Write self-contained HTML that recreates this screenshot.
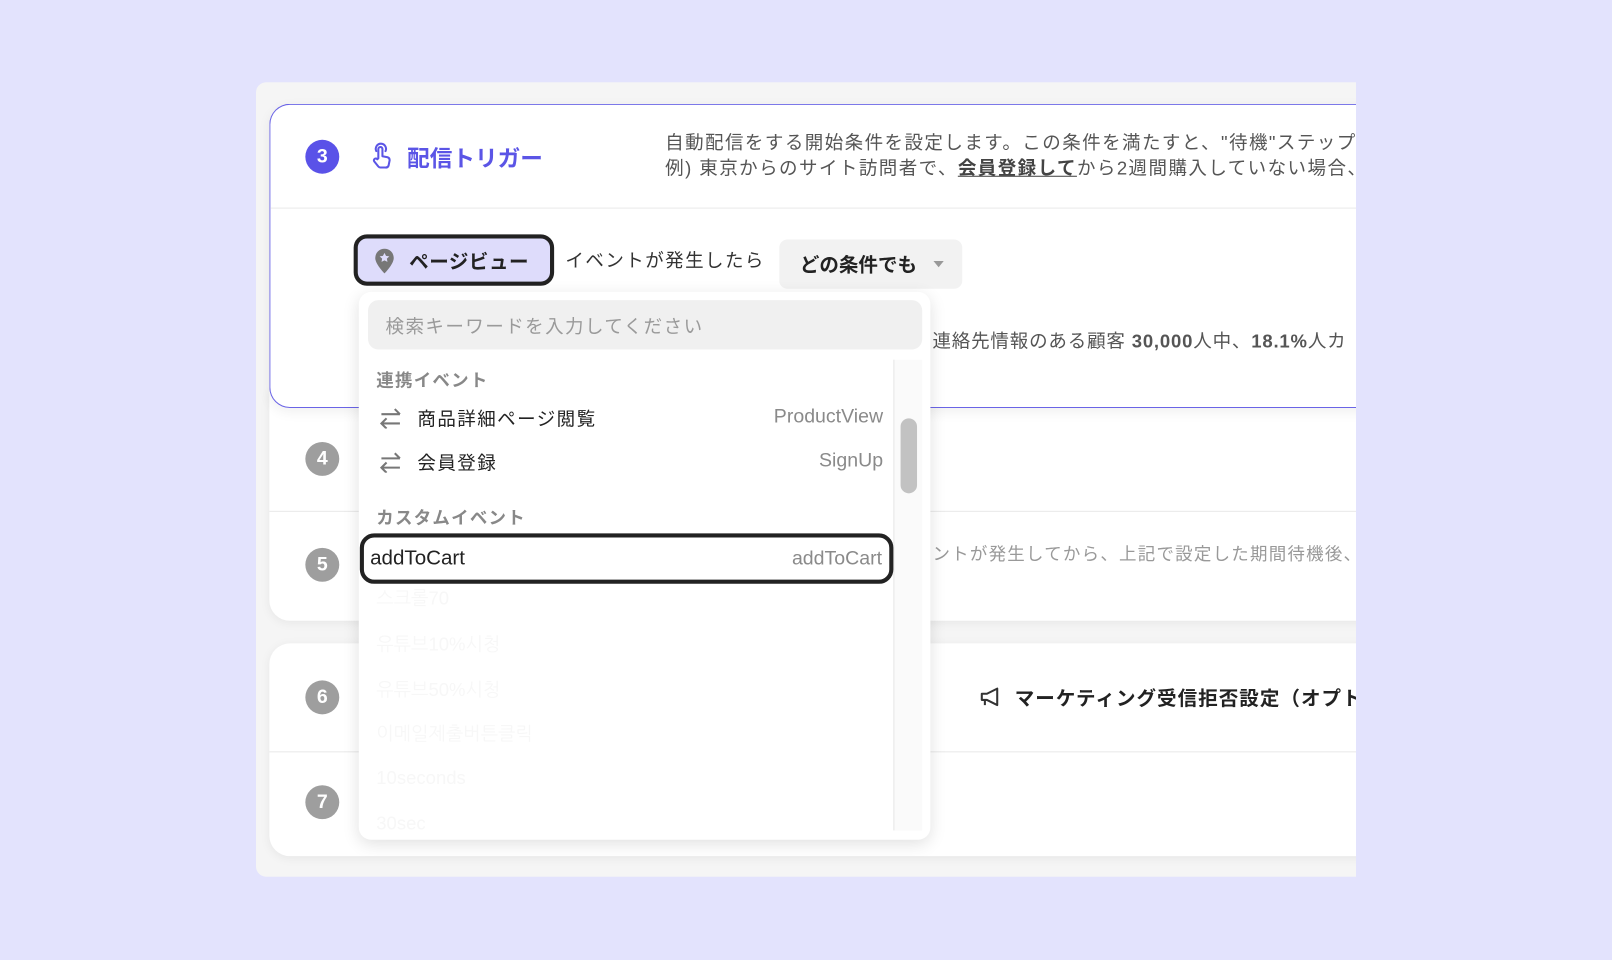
<!DOCTYPE html>
<html><head><meta charset="utf-8"><style>
*{margin:0;padding:0;box-sizing:border-box}
html,body{width:1612px;height:960px;overflow:hidden;background:#e3e3fd}
body{font-family:"Liberation Sans","Noto Sans CJK JP",sans-serif;color:#222}
#w{position:absolute;left:0;top:0;width:1568px;height:934px;transform-origin:0 0;transform:scale(1.02806,1.0278)}
#clip{position:absolute;left:0;top:0;width:1319px;height:934px;overflow:hidden}
.a{position:absolute;white-space:nowrap}
.j{letter-spacing:1.4px}
.num{position:absolute;width:33px;height:33px;border-radius:50%;background:#9e9e9e;color:#fff;font-weight:bold;font-size:19px;text-align:center;line-height:33px}
.card{position:absolute;background:#fff;box-shadow:0 2px 10px rgba(0,0,0,.06)}
.row{position:absolute;left:0;width:520px;height:43px;font-size:18px}
.row .l{position:absolute;left:57px;top:10px;letter-spacing:1.4px}
.row .r{position:absolute;right:10px;top:11px;color:#8a8a8a;font-size:19px}
.fade{color:#f7f7f7;font-size:18px}
</style></head><body><div id="w"><div id="clip">
<div class="a" style="left:249px;top:80px;width:1100px;height:773px;background:#f5f5f5;border-radius:10px 0 0 10px"></div>

<div class="card" style="left:262px;top:380px;width:1100px;height:224px;border-radius:0 0 20px 20px"></div>
<div class="a" style="left:262px;top:497px;width:1100px;height:1px;background:#e8e8e8"></div>
<div class="num" style="left:297px;top:430px">4</div>
<div class="num" style="left:297px;top:533px">5</div>
<div class="a j" style="left:907px;top:525px;font-size:17px;color:#999;letter-spacing:1.2px">ントが発生してから、上記で設定した期間待機後、行</div>

<div class="card" style="left:262px;top:626px;width:1100px;height:207px;border-radius:20px 0 0 20px"></div>
<div class="a" style="left:262px;top:731px;width:1100px;height:1px;background:#e8e8e8"></div>
<div class="num" style="left:297px;top:662px">6</div>
<div class="num" style="left:297px;top:764px">7</div>
<svg class="a" style="left:952px;top:666px" width="24" height="24" viewBox="0 0 24 24" fill="none" stroke="#333" stroke-width="2" stroke-linejoin="round"><path d="M3 9h5l10-5v16l-10-5H3z"/><path d="M6 15v5"/></svg>
<div class="a" style="left:987px;top:665px;font-size:19px;font-weight:bold;color:#222;letter-spacing:1px">マーケティング受信拒否設定（オプト</div>

<div class="a" style="left:262px;top:101px;width:1100px;height:296px;background:#fff;border:1.5px solid #6a64e6;border-right:none;border-radius:20px 0 0 20px;box-shadow:0 4px 12px rgba(0,0,0,.06)"></div>
<div class="a" style="left:263px;top:202px;width:1100px;height:1px;background:#eaeaea"></div>
<div class="num" style="left:297px;top:136px;background:#5a52e8">3</div>
<svg class="a" style="left:359px;top:138px" width="26" height="28" viewBox="0 0 26 28" fill="none" stroke="#5b55e6" stroke-width="2" stroke-linecap="round" stroke-linejoin="round"><path d="M7 9a5 5 0 1 1 9 0"/><path d="M9 16V7a2 2 0 0 1 4 0v7l5 1a3 3 0 0 1 2 3l-1 5a3 3 0 0 1-3 2h-5a3 3 0 0 1-2-1l-4-5a1.8 1.8 0 0 1 3-2z"/></svg>
<div class="a" style="left:396px;top:137px;font-size:22px;font-weight:bold;color:#5b55e6">配信トリガー</div>
<div class="a" style="left:647px;top:127px;font-size:18px;color:#555;line-height:25px;letter-spacing:1.4px">自動配信をする開始条件を設定します。この条件を満たすと、"待機"ステップ<br>例) 東京からのサイト訪問者で、<b style="text-decoration:underline;color:#444">会員登録して</b>から2週間購入していない場合、</div>

<div class="a" style="left:344px;top:228px;width:195px;height:50px;border:4px solid #222;border-radius:13px;background:#dedcfb"></div>
<svg class="a" style="left:364px;top:241px" width="20" height="26" viewBox="0 0 20 26"><path d="M10 1a9 9 0 0 0-9 9c0 6 9 15 9 15s9-9 9-15a9 9 0 0 0-9-9z" fill="#777"/><path d="M10 5l1.5 3 3.2.4-2.4 2.2.6 3.2L10 12.3 7.1 13.8l.6-3.2-2.4-2.2 3.2-.4z" fill="#dedcfb"/></svg>
<div class="a" style="left:398px;top:240px;font-size:19px;font-weight:bold;letter-spacing:.5px">ページビュー</div>
<div class="a j" style="left:550px;top:240px;font-size:18px;color:#333">イベントが発生したら</div>
<div class="a" style="left:758px;top:233px;width:178px;height:48px;background:#f2f2f2;border-radius:8px"></div>
<div class="a" style="left:778px;top:243px;font-size:19px;font-weight:bold">どの条件でも</div>
<div class="a" style="left:908px;top:254px;border-left:5px solid transparent;border-right:5px solid transparent;border-top:6px solid #999"></div>
<div class="a" style="left:907px;top:318px;font-size:18px;color:#555;letter-spacing:.8px">連絡先情報のある顧客 <b>30,000</b>人中、<b>18.1%</b>人カ</div>

<div class="a" style="left:349px;top:284px;width:556px;height:533px;background:#fff;border-radius:12px;box-shadow:0 4px 16px rgba(0,0,0,.12);overflow:hidden">
 <div class="a" style="left:9px;top:8px;width:539px;height:48px;background:#f0f0f0;border-radius:10px"></div>
 <div class="a j" style="left:26px;top:20px;font-size:18px;color:#9a9a9a">検索キーワードを入力してください</div>
 <div class="a" style="left:520px;top:66px;width:28px;height:458px;background:#fafafa;border-left:1px solid #e6e6e6"></div>
 <div class="a" style="left:527px;top:123px;width:16px;height:73px;background:#c2c2c2;border-radius:8px"></div>
 <div class="a" style="left:17px;top:72px;font-size:17px;font-weight:bold;color:#888;letter-spacing:1.2px">連携イベント</div>
 <div class="row" style="top:100px"><svg class="a" style="left:19px;top:13px" width="24" height="20" viewBox="0 0 24 20" fill="none" stroke="#777" stroke-width="2"><path d="M3 6h18M16 1l5 5"/><path d="M21 15H3M8 10l-5 5 5 5"/></svg><span class="l">商品詳細ページ閲覧</span><span class="r">ProductView</span></div>
 <div class="row" style="top:143px"><svg class="a" style="left:19px;top:13px" width="24" height="20" viewBox="0 0 24 20" fill="none" stroke="#777" stroke-width="2"><path d="M3 6h18M16 1l5 5"/><path d="M21 15H3M8 10l-5 5 5 5"/></svg><span class="l">会員登録</span><span class="r">SignUp</span></div>
 <div class="a" style="left:17px;top:206px;font-size:17px;font-weight:bold;color:#888;letter-spacing:1.2px">カスタムイベント</div>
 <div class="a" style="left:1px;top:235px;width:519px;height:49px;border:4px solid #222;border-radius:14px;background:#fff"></div>
 <div class="a" style="left:11px;top:248px;font-size:20px">addToCart</div>
 <div class="a" style="right:47px;top:249px;font-size:19px;color:#8a8a8a">addToCart</div>
 <div class="a fade" style="left:17px;top:287px;font-family:'Liberation Sans','NanumGothic',sans-serif">스크롤70</div>
 <div class="a fade" style="left:17px;top:332px;font-family:'Liberation Sans','NanumGothic',sans-serif">유튜브10%시청</div>
 <div class="a fade" style="left:17px;top:376px;font-family:'Liberation Sans','NanumGothic',sans-serif">유튜브50%시청</div>
 <div class="a fade" style="left:17px;top:419px;font-family:'Liberation Sans','NanumGothic',sans-serif">이메일제출버튼클릭</div>
 <div class="a fade" style="left:17px;top:463px">10seconds</div>
 <div class="a fade" style="left:17px;top:507px">30sec</div>
</div>
</div></div></body></html>
